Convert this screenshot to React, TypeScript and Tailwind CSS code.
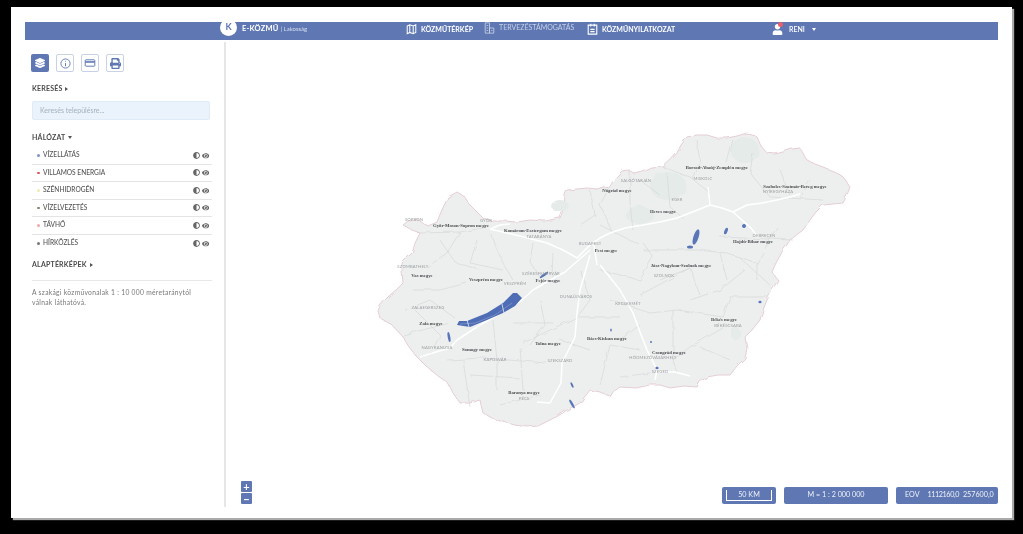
import React from "react";
import { FaLayerGroup, FaPrint, FaUser, FaEye, FaAdjust } from "react-icons/fa";

const OUTLINE = "M403,225 L408,221 L418,220 L428,226 L437,222 L441,212 L448,197 L457,192 L464,196 L470,205 L478,213 L483,218 L493,221 L503,221 L517,222 L530,220 L545,221 L560,218 L564,208 L565,195 L567,190 L577,189 L587,188 L597,189 L603,187 L610,186 L616,177 L622,171 L627,170 L635,174 L643,172 L652,168 L663,167 L671,160 L677,153 L681,145 L687,137 L697,135 L707,135 L717,138 L727,138 L737,136 L747,133 L757,137 L761,146 L767,153 L775,154 L783,152 L792,149 L800,148 L804,154 L807,160 L815,164 L823,167 L833,171 L843,177 L850,187 L847,195 L843,203 L833,204 L823,205 L816,212 L810,220 L803,230 L790,240 L782,252 L775,265 L772,272 L778,280 L772,290 L767,300 L763,310 L760,320 L752,330 L745,337 L747,348 L745,358 L737,366 L730,375 L718,375 L707,377 L700,382 L697,387 L684,386 L670,388 L660,385 L650,385 L636,388 L620,387 L613,392 L610,397 L600,392 L590,390 L580,403 L567,410 L558,416 L550,420 L538,426 L527,427 L515,425 L503,422 L492,418 L483,413 L481,405 L480,400 L470,403 L460,403 L453,393 L448,383 L438,376 L427,367 L421,361 L417,357 L409,347 L403,337 L392,325 L380,318 L378,311 L380,306 L385,300 L390,295 L397,289 L403,283 L402,272 L402,263 L407,258 L412,253 L415,243 L420,233 L412,230 Z";

const COUNTY = [
  "M420,233 L460,232 L483,228", "M460,232 L447,253 L427,267", "M477,240 L470,263 L503,270", "M490,233 L503,263 L513,280",
  "M553,253 L552,277", "M413,290 L440,290 L467,283", "M493,320 L497,360 L497,390", "M403,335 L450,323", "M463,360 L470,407",
  "M447,360 L483,358 L547,363", "M520,347 L523,390", "M523,343 L577,317", "M577,317 L620,317", "M513,323 L553,323",
  "M663,167 L690,177 L710,193", "M697,140 L700,163 L693,180", "M733,140 L727,163", "M750,173 L770,197 L823,200", "M753,153 L750,173",
  "M630,170 L630,203 L633,230", "M667,173 L670,207 L683,218", "M720,237 L793,240", "M777,227 L757,263 L757,280",
  "M643,250 L697,250 L727,253 L757,263", "M640,280 L653,257 L643,243", "M720,253 L727,280", "M610,300 L650,313 L677,310 L723,317",
  "M723,317 L730,297 L767,297", "M723,328 L690,347 L673,360", "M673,310 L673,360 L677,373", "M620,377 L650,373",
  "M590,190 L595,215 L580,225", "M610,186 L600,205 L612,232", "M533,243 L530,262 L545,285", "M580,270 L590,300 L578,316",
  "M660,280 L690,268 L700,295", "M640,295 L690,268", "M740,258 L770,285", "M430,300 L455,318", "M405,310 L430,300",
  "M540,300 L545,325 L530,345", "M640,350 L610,345 L600,385", "M700,347 L730,360", "M600,270 L640,280",
  "M440,240 L455,262 L480,270", "M415,310 L440,335 L430,355", "M470,375 L520,378", "M500,405 L540,395", "M560,340 L590,350", "M620,340 L640,325",
  "M690,300 L720,290 L745,270", "M780,170 L790,195", "M810,180 L800,198", "M640,180 L660,195", "M600,225 L640,245",
];

const ROADS = [
  "M610,233 L625,228 L643,225 L660,222 L677,218 L695,211 L710,205 L722,208 L733,212 L747,205 L762,203 L777,200 L790,197 L800,194",
  "M710,205 L709,195 L708,187", "M733,212 L742,220 L750,227 L758,237",
  "M590,245 L600,238 L610,233", "M533,290 L522,300 L503,312 L480,325 L457,340 L450,348 L436,352 L420,357",
  "M590,250 L565,272 L545,283 L533,290", "M577,313 L575,337 L562,363 L561,383 L550,403 L537,402", "M590,255 L580,290 L577,313",
  "M490,229 L500,225 L510,224", "M490,229 L520,236 L547,243 L563,250 L577,258 L590,245", "M600,265 L620,290 L633,313 L640,332 L647,350 L657,370 L655,380",
  "M594,245 L597,265", "M657,372 L675,372 L690,376",
];

const GREEN = [[668,186,18,14],[745,150,14,13],[640,215,14,9],[736,334,5,6],[560,206,9,6]];
const BLUE: number[][] = [[696,237,2.6,8,18],[690,247,3,1.5,0],[726,231,1.6,3.5,20],[744,226,2,2,-30],[544,275,5,1.3,-35],[449,337,1.3,5,-10],[760,302,1.6,1.2,0],[572,385,1,3,-25],[611,330,0.8,1.6,0],[657,368,1.6,1.2,0],[572,404,1.2,5,-30],[651,342,1,1,0]];

const COUNTIES: [string, number, number][] = [
  ["Győr-Moson-Sopron megye", 461, 227], ["Komárom-Esztergom megye", 533, 232], ["Nógrád megye", 617, 192],
  ["Borsod-Abaúj-Zemplén megye", 717, 169], ["Szabolcs-Szatmár-Bereg megye", 795, 188], ["Heves megye", 663, 213],
  ["Pest megye", 606, 252], ["Hajdú-Bihar megye", 753, 243], ["Jász-Nagykun-Szolnok megye", 681, 267],
  ["Vas megye", 422, 277], ["Veszprém megye", 486, 281], ["Fejér megye", 548, 282], ["Zala megye", 431, 325],
  ["Somogy megye", 477, 351], ["Tolna megye", 548, 345], ["Bács-Kiskun megye", 607, 340], ["Baranya megye", 524, 394],
  ["Békés megye", 724, 321], ["Csongrád megye", 669, 354],
];
const CITIES: [string, number, number][] = [
  ["SOPRON", 414, 221], ["GYŐR", 486, 222], ["TATABÁNYA", 539, 238], ["SALGÓTARJÁN", 636, 182], ["MISKOLC", 703, 180],
  ["NYÍREGYHÁZA", 778, 193], ["EGER", 677, 201], ["BUDAPEST", 590, 245], ["DEBRECEN", 764, 237], ["SZOLNOK", 664, 277],
  ["SZOMBATHELY", 413, 268], ["SZÉKESFEHÉRVÁR", 541, 275], ["VESZPRÉM", 515, 285], ["DUNAÚJVÁROS", 576, 298],
  ["KECSKEMÉT", 628, 305], ["ZALAEGERSZEG", 428, 309], ["NAGYKANIZSA", 437, 349], ["KAPOSVÁR", 495, 361],
  ["SZEKSZÁRD", 560, 362], ["PÉCS", 524, 400], ["BÉKÉSCSABA", 728, 327], ["HÓDMEZŐVÁSÁRHELY", 653, 359], ["SZEGED", 660, 373],
];

const NETWORKS: [string, string][] = [
  ["VÍZELLÁTÁS", "#7d93c8"], ["VILLAMOS ENERGIA", "#e0555f"], ["SZÉNHIDROGÉN", "#f0ecb0"],
  ["VÍZELVEZETÉS", "#8a7f70"], ["TÁVHŐ", "#f0a8a8"], ["HÍRKÖZLÉS", "#777777"],
];

function MapNav() {
  return (
    <svg viewBox="0 0 12 14" className="h-[12px] w-[11px]" fill="none" stroke="white" strokeWidth="1.2">
      <path d="M1 3.5 L4 2 L8 3.5 L11 2 V11 L8 12.5 L4 11 L1 12.5 Z M4 2 V11 M8 3.5 V12.5" />
    </svg>
  );
}
function PlanNav() {
  return (
    <svg viewBox="0 0 12 14" className="h-[12px] w-[11px]" fill="none" stroke="#c6d0e6" strokeWidth="1">
      <path d="M1 1 H6 V13 H1 Z M6 7 H11 V13 H6 Z M2.5 4 H4.5 M2.5 7 H4.5 M2.5 10 H4.5 M8 10 H9.5" />
    </svg>
  );
}
function DeclNav() {
  return (
    <svg viewBox="0 0 12 14" className="h-[12px] w-[11px]" fill="none" stroke="white" strokeWidth="1.3">
      <path d="M1 2.5 H11 V13 H1 Z M4 1 V4 M8 1 V4 M3.5 7.5 H8.5 M3.5 10 H8.5" />
    </svg>
  );
}

export default function App() {
  return (
    <div className="h-[534px] w-[1023px] overflow-hidden bg-black pt-[7px] pl-[11px] [font-family:Lato,'Liberation_Sans',sans-serif]">
      <div className="h-[511px] w-[1001px] bg-white px-[14px] pt-[15px] text-[#555] shadow-[2px_2px_1px_#aaaaaa] blur-[0.6px]">
        <header className="flex h-[18px] w-[973px] items-center bg-[#5f78b3] pl-[195px] text-white">
          <div className="-mt-[8px] flex h-[17px] w-[17px] shrink-0 items-center justify-center rounded-full bg-white text-[9px] font-bold text-[#5f78b3]">K</div>
          <div className="-mt-[5px] ml-[5px] flex w-[164px] shrink-0 items-center">
            <span className="text-[7.5px] font-bold tracking-[0.2px]">E-KÖZMŰ</span>
            <span className="ml-[2px] text-[6px] text-[#d7def0]">| Lakosság</span>
          </div>
          <div className="-mt-[4px] flex w-[78px] shrink-0 items-center gap-[4px] text-[7px] font-bold">
            <MapNav /><span>KÖZMŰTÉRKÉP</span>
          </div>
          <div className="-mt-[7px] flex w-[103px] shrink-0 items-center gap-[4px] text-[7px] text-[#c6d0e6]">
            <PlanNav /><span>TERVEZÉSTÁMOGATÁS</span>
          </div>
          <div className="-mt-[4px] flex w-[185px] shrink-0 items-center gap-[4px] text-[7px] font-bold">
            <DeclNav /><span>KÖZMŰNYILATKOZAT</span>
          </div>
          <div className="-mt-[4px] flex items-center">
            <div className="relative">
              <FaUser className="h-[11px] w-[11px] text-white" />
              <span className="absolute -top-[2px] left-[6px] h-[5px] w-[5px] rounded-full bg-[#e8606a]" />
            </div>
            <span className="ml-[6px] text-[7px] font-semibold">RENI</span>
            <span className="ml-[7px] border-x-[2.5px] border-t-[3px] border-x-transparent border-t-white" />
          </div>
        </header>

        <div className="mt-[2px] flex h-[465px] w-[973px]">
          <aside className="h-full w-[201px] shrink-0 border-r-2 border-[#e6e6e6] pr-[13px] pl-[6px] pt-[12px]">
            <div className="flex gap-[7px]">
              <button className="flex h-[18px] w-[18px] items-center justify-center rounded-[2px] bg-[#5f78b3] text-white"><FaLayerGroup className="h-[10px] w-[10px]" /></button>
              <button className="flex h-[18px] w-[18px] items-center justify-center rounded-[2px] border border-[#c8d2e4] text-[#5f78b3]">
                <svg viewBox="0 0 12 12" className="h-[11px] w-[11px]" fill="none" stroke="currentColor"><circle cx="6" cy="6" r="5" /><path d="M6 5.5 V9 M6 3 V4" /></svg>
              </button>
              <button className="flex h-[18px] w-[18px] items-center justify-center rounded-[2px] border border-[#c8d2e4] text-[#5f78b3]">
                <svg viewBox="0 0 14 10" className="h-[8px] w-[12px]" fill="none" stroke="currentColor" strokeWidth="1.2"><rect x="1" y="1" width="12" height="8" rx="1" /><path d="M1 3.7 H13" strokeWidth="2" /></svg>
              </button>
              <button className="flex h-[18px] w-[18px] items-center justify-center rounded-[2px] border border-[#c8d2e4] text-[#5f78b3]"><FaPrint className="h-[11px] w-[11px]" /></button>
            </div>

            <div className="mt-[12px] ml-[1px] flex h-[9px] items-center gap-[3px] text-[7px] font-bold tracking-[0.2px] text-[#4a4a4a]">
              KERESÉS <span className="border-y-[2px] border-l-[3px] border-y-transparent border-l-[#555]" />
            </div>
            <div className="mt-[8px] ml-[1px] flex h-[19px] w-[178px] items-center rounded-[2px] border border-[#dfebf6] bg-[#eaf3fb] pl-[7px] text-[7px] text-[#a3b0bc]">
              Keresés településre...
            </div>
            <div className="mt-[13px] ml-[1px] flex h-[9px] items-center gap-[3px] text-[7px] font-bold tracking-[0.2px] text-[#4a4a4a]">
              HÁLÓZAT <span className="border-x-[2px] border-t-[3px] border-x-transparent border-t-[#555]" />
            </div>

            <ul className="mt-[5px] ml-[1px] w-[180px]">
              {NETWORKS.map(([name, color], i) => (
                <li key={name} className={"box-border flex h-[17.5px] items-center pl-[5px] pr-[3px] " + (i < 5 ? "border-b border-[#e4e4e4]" : "")}>
                  <span className="h-[2.5px] w-[2.5px] rounded-full" style={{ backgroundColor: color }} />
                  <span className="ml-[3.5px] flex-1 text-[6.6px] font-medium text-[#555]">{name}</span>
                  <FaAdjust className="h-[7px] w-[7px] text-[#666]" />
                  <FaEye className="ml-[2px] h-[7.5px] w-[7.5px] text-[#666]" />
                </li>
              ))}
            </ul>

            <div className="mt-[8px] ml-[1px] flex h-[9px] items-center gap-[3px] text-[7px] font-bold tracking-[0.2px] text-[#4a4a4a]">
              ALAPTÉRKÉPEK <span className="border-y-[2px] border-l-[3px] border-y-transparent border-l-[#555]" />
            </div>
            <div className="mt-[11px] ml-[1px] w-[180px] border-t border-[#e8e8e8] pt-[6px] text-[6.7px] leading-[10px] tracking-[0.3px] text-[#777]">
              A szakági közművonalak 1 : 10 000 méretaránytól<br />válnak láthatóvá.
            </div>
          </aside>

          <main className="relative h-full flex-1">
            <svg viewBox="226 42 772 465" className="h-[465px] w-[772px]">
              <defs>
                <filter id="rough" x="-5%" y="-5%" width="110%" height="110%">
                  <feTurbulence type="fractalNoise" baseFrequency="0.09" numOctaves="2" seed="4" />
                  <feDisplacementMap in="SourceGraphic" scale="4" />
                </filter>
              </defs>
              <g filter="url(#rough)">
                <path d={OUTLINE} fill="#edefef" stroke="#e5cdd6" strokeWidth="1" />
                {GREEN.map(([x, y, rx, ry]) => <ellipse key={x} cx={x} cy={y} rx={rx} ry={ry} fill="#e5ebe8" />)}
                {COUNTY.map((d) => <path key={d} d={d} fill="none" stroke="#d6d9d9" strokeWidth="0.7" />)}
              </g>
              {ROADS.map((d) => <path key={d} d={d} fill="none" stroke="#ffffff" strokeWidth="1.5" strokeLinejoin="round" />)}
              <path d="M457,325 L470,327 L487,320 L503,313 L515,306 L522,298 L517,293 L513,293 L503,303 L487,313 L467,321 L459,321 Z" fill="#4f6db5" />
              <path d="M460,324 L475,323 L495,315 L512,303" fill="none" stroke="#8fa3d2" strokeWidth="0.6" />
              <path d="M467,320 L469,327 M502,304 L504,313" fill="none" stroke="#e8ecf5" strokeWidth="0.8" />
              {BLUE.map(([x, y, rx, ry, r]) => <ellipse key={x + "-" + y} cx={x} cy={y} rx={rx} ry={ry} fill="#5a75b8" transform={`rotate(${r} ${x} ${y})`} />)}
              {CITIES.map(([t, x, y]) => (
                <text key={t} x={x} y={y} textAnchor="middle" fontSize="4.2" fill="#9a9ea0" letterSpacing="0.15" fontFamily="Lato, sans-serif">{t}</text>
              ))}
              {COUNTIES.map(([t, x, y]) => (
                <text key={t} x={x} y={y} textAnchor="middle" fontSize="4.75" fontWeight="700" fill="#4a4d4f" fontFamily="'Liberation Serif', serif">{t}</text>
              ))}
            </svg>

            <div className="absolute left-[15px] bottom-[3px] flex flex-col gap-[1px]">
              <button className="flex h-[11px] w-[11px] items-center justify-center rounded-[1px] bg-[#5f78b3] text-[11px] font-bold leading-none text-white">+</button>
              <button className="flex h-[11px] w-[11px] items-center justify-center rounded-[1px] bg-[#5f78b3] text-[11px] font-bold leading-none text-white">−</button>
            </div>

            <div className="absolute right-0 bottom-[3px] flex h-[17px] gap-[8px] text-[7.2px] text-[#eef1f8]">
              <div className="flex w-[54px] items-center justify-center rounded-[2px] bg-[#5f78b3] py-[3px]">
                <div className="flex h-[11px] w-[46px] items-center justify-center border-x border-b border-white">50 KM</div>
              </div>
              <div className="flex w-[104px] items-center justify-center rounded-[2px] bg-[#5f78b3]">M = 1 : 2 000 000</div>
              <div className="flex w-[102px] items-center rounded-[2px] bg-[#5f78b3] pl-[9px]">
                <span>EOV</span><span className="ml-[8px] tracking-[-0.4px]">1112160,0</span><span className="ml-[4px]">257600,0</span>
              </div>
            </div>
          </main>
        </div>
      </div>
    </div>
  );
}
